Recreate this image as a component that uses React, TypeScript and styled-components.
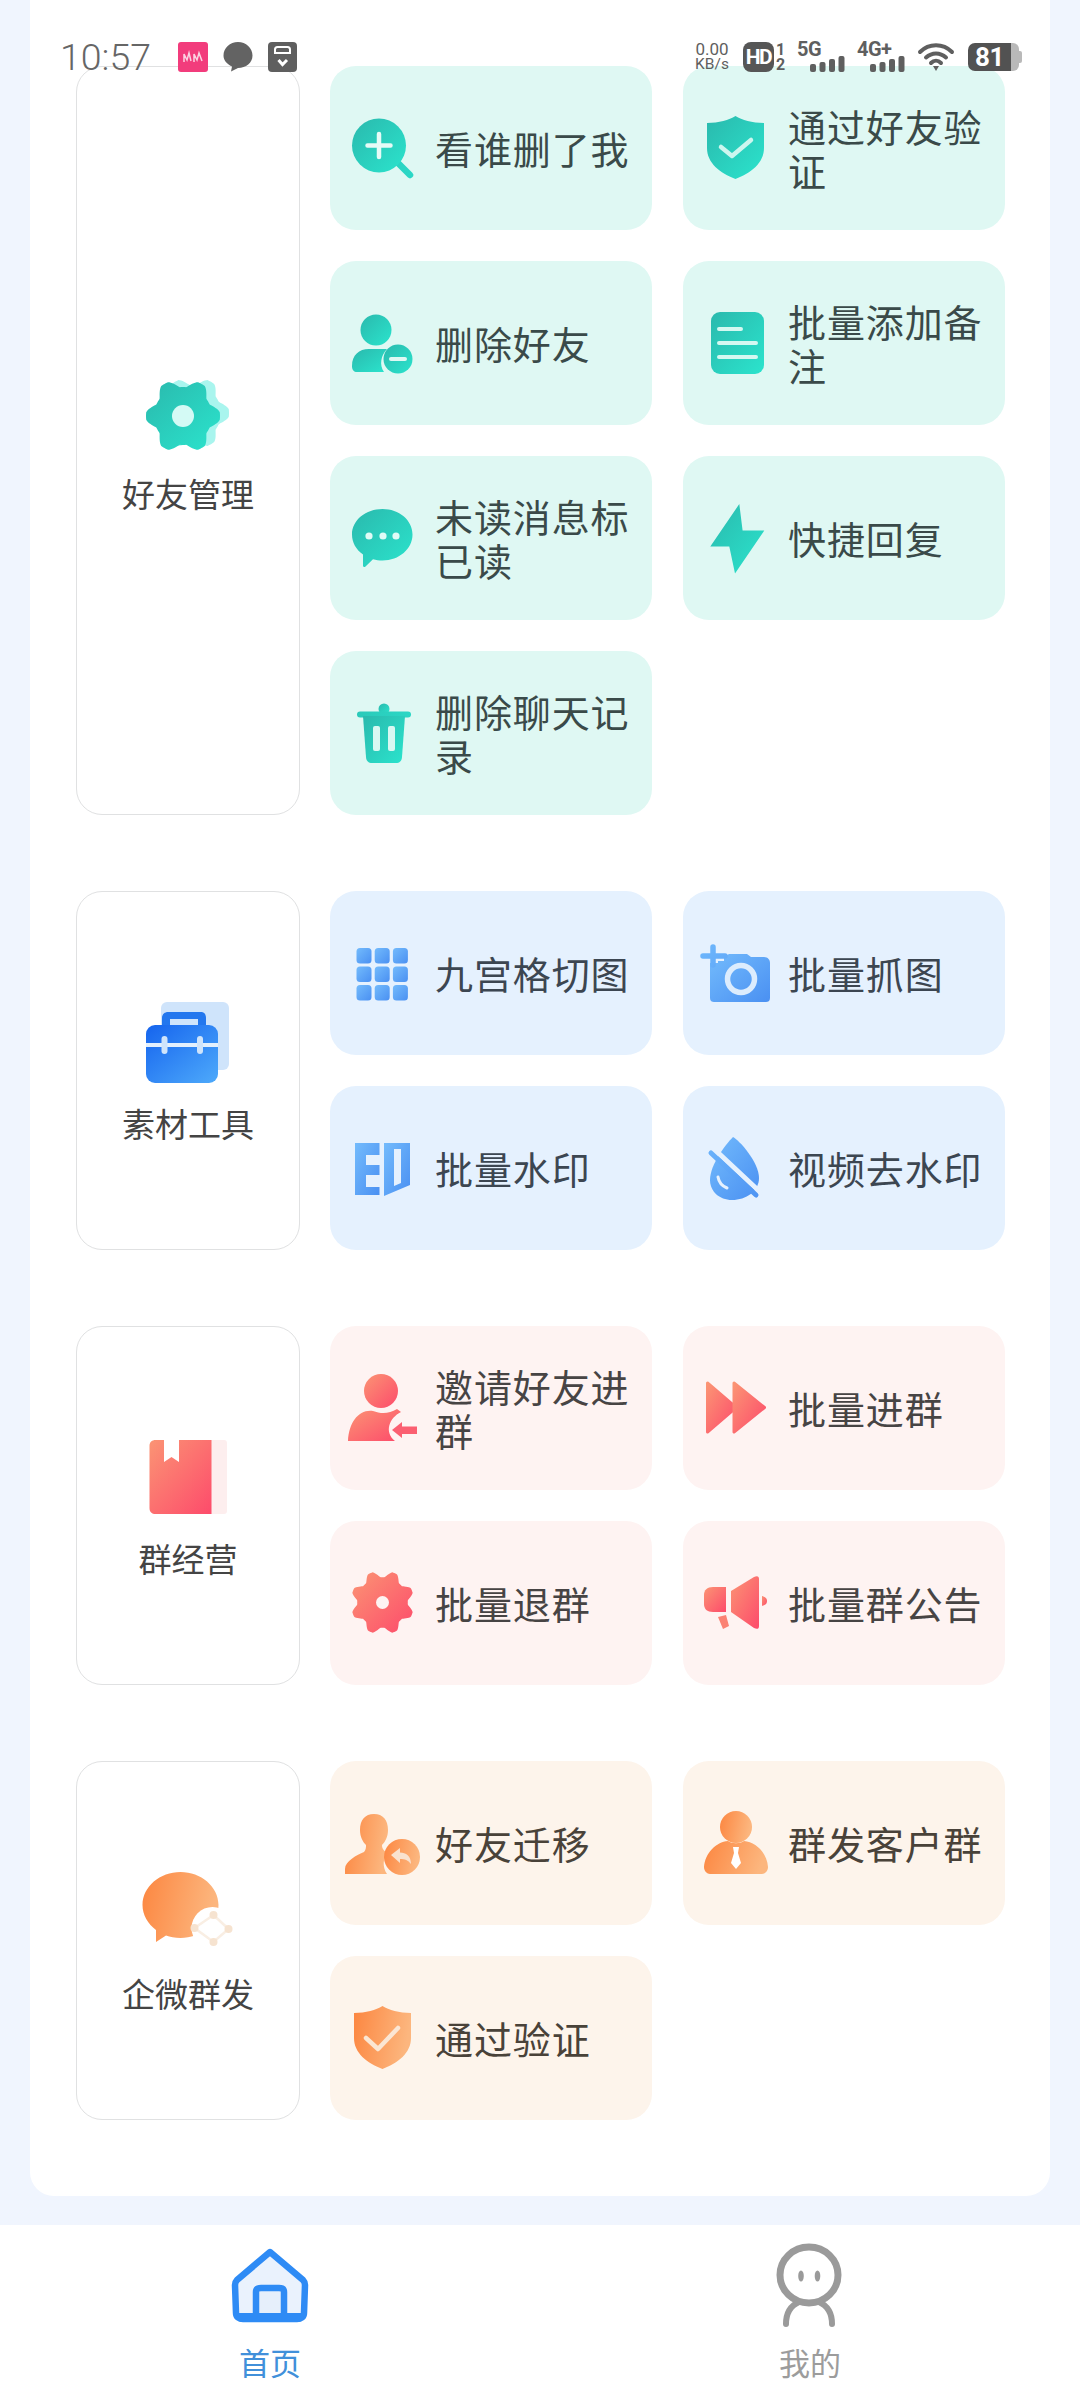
import React from 'react';
import styled, { createGlobalStyle } from 'styled-components';

const Global = createGlobalStyle`
  html, body { margin: 0; padding: 0; background: #f0f5fe; }
  body { font-family: "Noto Sans CJK SC", "Noto Sans", sans-serif; }
  * { box-sizing: border-box; }
`;

type Tone = 'teal' | 'blue' | 'red' | 'orange';

const toneBg: Record<Tone, string> = { teal: '#dff8f3', blue: '#e5f1fe', red: '#fef3f2', orange: '#fdf4eb' };
const toneText: Record<Tone, string> = { teal: '#3a4a49', blue: '#3c4651', red: '#474444', orange: '#494239' };

const Page = styled.div`
  position: relative;
  width: 1080px;
  height: 2400px;
  overflow: hidden;
  display: flex;
  flex-direction: column;
  background: #f0f5fe;
`;
const Main = styled.main`
  flex: 1;
  padding: 0 30px 29px;
`;
const Card = styled.div`
  height: 100%;
  background: #fff;
  border-radius: 0 0 24px 24px;
  padding: 66px 46px 0;
  display: flex;
  flex-direction: column;
  gap: 76px;
`;
const Group = styled.section`
  display: grid;
  grid-template-columns: 224px 1fr;
  column-gap: 30px;
`;
const Panel = styled.div`
  border: 1.5px solid #e0e1e2;
  border-radius: 26px;
  display: flex;
  flex-direction: column;
  align-items: center;
  justify-content: center;
  gap: 22px;
  padding-bottom: 2px;
`;
const PanelLabel = styled.div`
  font-size: 33px;
  line-height: 30px;
  color: #444;
  white-space: nowrap;
`;
const TileGrid = styled.div`
  display: grid;
  grid-template-columns: 322px 322px;
  grid-auto-rows: 164px;
  gap: 31px 31px;
`;
const Tile = styled.div<{ $tone: Tone }>`
  display: flex;
  align-items: center;
  gap: 20px;
  padding: 0 18px 0 21px;
  border-radius: 26px;
  background: ${p => toneBg[p.$tone]};
  color: ${p => toneText[p.$tone]};
`;
const TileText = styled.div`
  font-size: 38px;
  letter-spacing: 0.9px;
  line-height: 44px;
`;
const TileSvg = styled.svg`
  width: 64px;
  height: 64px;
  flex: none;
  overflow: visible;
  display: block;
`;
const PanelSvg = styled.svg`
  width: 84px;
  height: 84px;
  flex: none;
  overflow: visible;
  display: block;
`;
const DefsSvg = styled.svg`
  display: block;
  width: 0;
  height: 0;
`;

const Nav = styled.nav`
  height: 175px;
  background: #fff;
  display: grid;
  grid-template-columns: 1fr 1fr;
  padding-top: 19px;
`;
const NavItem = styled.div`
  display: flex;
  flex-direction: column;
  align-items: center;
  gap: 12px;
`;
const NavLabel = styled.div<{ $active?: boolean }>`
  font-size: 31px;
  line-height: 44px;
  color: ${p => (p.$active ? '#4190da' : '#9c9c9c')};
`;

const StatusBar = styled.div`
  position: absolute;
  top: 42px;
  left: 60px;
  right: 58px;
  height: 30px;
  display: flex;
  align-items: center;
  justify-content: space-between;
  font-family: Roboto, "Liberation Sans", sans-serif;
  color: #5f5f5f;
`;
const StatusLeft = styled.div`
  display: flex;
  align-items: center;
`;
const StatusRight = styled.div`
  display: flex;
  align-items: center;
  gap: 12px;
`;
const Clock = styled.span`
  font-size: 37.5px;
  font-weight: 300;
  line-height: 30px;
  width: 118px;
  color: #666;
`;
const StatusIcon = styled.svg`
  width: 30px;
  height: 30px;
  display: block;
  margin-right: 15px;
`;
const Speed = styled.div`
  width: 38px;
  display: flex;
  flex-direction: column;
  align-items: center;
  font-size: 17px;
  line-height: 15px;
  white-space: nowrap;
`;
const SpeedUnit = styled.span`
  font-size: 15.5px;
`;
const HdWrap = styled.div`
  display: flex;
  align-items: center;
  gap: 2px;
`;
const HdBadge = styled.span`
  width: 31px;
  height: 30px;
  border-radius: 8px;
  background: #565656;
  color: #fff;
  font-size: 21px;
  font-weight: 700;
  letter-spacing: -1.5px;
  display: flex;
  align-items: center;
  justify-content: center;
`;
const SimIndex = styled.div`
  display: flex;
  flex-direction: column;
  font-size: 16px;
  font-weight: 700;
  line-height: 15px;
  width: 9px;
`;
const Signal = styled.div`
  width: 48px;
  height: 30px;
  display: flex;
  flex-direction: column;
`;
const NetText = styled.span`
  font-size: 20px;
  font-weight: 700;
  line-height: 14px;
  height: 14px;
  letter-spacing: -0.5px;
`;
const BarsSvg = styled.svg`
  width: 35px;
  height: 16px;
  align-self: flex-end;
  display: block;
`;
const WifiSvg = styled.svg`
  width: 39px;
  height: 30px;
  display: block;
`;
const Battery = styled.div`
  display: flex;
  align-items: center;
  height: 28px;
`;
const BatteryFill = styled.span`
  width: 43px;
  height: 28px;
  border-radius: 7px 0 0 7px;
  background: #525252;
  color: #fff;
  font-size: 26px;
  font-weight: 700;
  letter-spacing: -0.5px;
  display: flex;
  align-items: center;
  justify-content: center;
`;
const BatteryRest = styled.span`
  width: 8px;
  height: 28px;
  border-radius: 0 6px 6px 0;
  background: #b9b9b9;
`;
const BatteryNub = styled.span`
  width: 3px;
  height: 12px;
  border-radius: 0 2px 2px 0;
  background: #b9b9b9;
`;

const lobed = (cx: number, cy: number, r: number, a: number, n: number, rotDeg = 0) => {
  const pts: string[] = [];
  for (let i = 0; i < 180; i++) {
    const th = (i / 180) * Math.PI * 2;
    const R = r + a * Math.max(-0.8, Math.min(0.8, Math.cos(n * (th - (rotDeg * Math.PI) / 180))));
    pts.push(`${(cx + R * Math.cos(th)).toFixed(2)},${(cy - R * Math.sin(th)).toFixed(2)}`);
  }
  return `M${pts.join('L')}Z`;
};

const T = ({ children }: { children: React.ReactNode }) => <TileSvg viewBox="0 0 64 64">{children}</TileSvg>;
const P = ({ children }: { children: React.ReactNode }) => <PanelSvg viewBox="0 0 84 84">{children}</PanelSvg>;

const shieldPath = 'M31.5 0 C38 4 48 7 60 7 V32 C60 47 47 57 31.5 63 C16 57 3 47 3 32 V7 C15 7 25 4 31.5 0 Z';

const icons = {
  search: (
    <T>
      <path d="M47 47 L59 59" stroke="url(#tealFlat)" strokeWidth="6.5" strokeLinecap="round" />
      <circle cx="28" cy="29.5" r="27" fill="url(#teal)" />
      <path d="M28 18 V41 M16.5 29.5 H39.5" stroke="#e6fbf7" strokeWidth="4.5" strokeLinecap="round" />
    </T>
  ),
  delFriend: (
    <T>
      <circle cx="25" cy="19" r="15.5" fill="url(#teal)" />
      <path d="M1 55 C1 44 8 38 18 38 H36 C30 44 28 54 33 61 H6 C3 61 1 59 1 55 Z" fill="url(#teal)" />
      <circle cx="47" cy="48" r="14.5" fill="url(#teal)" />
      <path d="M40 48 H54" stroke="#dff8f3" strokeWidth="4" strokeLinecap="round" />
    </T>
  ),
  shieldTeal: (
    <T>
      <path d={shieldPath} fill="url(#teal)" />
      <path d="M17 31 L28 40 L47 24" fill="none" stroke="#cdf6ef" strokeWidth="4.5" strokeLinecap="round" strokeLinejoin="round" />
    </T>
  ),
  doc: (
    <T>
      <rect x="7" y="1" width="53" height="62" rx="9" fill="url(#teal)" />
      <path d="M15 18 H37 M15 32 H52 M15 46 H52" stroke="#d4f8f1" strokeWidth="4" strokeLinecap="round" />
    </T>
  ),
  chat: (
    <T>
      <path d="M31.5 3 C48 3 61.5 14 61.5 28.5 C61.5 43 48 54.5 31.5 54.5 C28 54.5 25 54 22 53.2 L14.5 60.5 C13.5 61.5 12 61 12 59.5 L12 48.5 C5 43.5 1 36.5 1 28.5 C1 14 15 3 31.5 3 Z" fill="url(#teal)" />
      <circle cx="18" cy="30" r="3.6" fill="#e0fbf6" />
      <circle cx="32" cy="30" r="3.6" fill="#e0fbf6" />
      <circle cx="45" cy="30" r="3.6" fill="#e0fbf6" />
    </T>
  ),
  bolt: (
    <T>
      <path d="M35.3 -2 L6.3 40.5 H25.3 L31 67.6 L60.3 24.6 H38.6 Z" fill="url(#teal)" />
    </T>
  ),
  trash: (
    <T>
      <circle cx="33" cy="8" r="5.5" fill="url(#teal)" />
      <path d="M9 13.5 H57" stroke="url(#tealFlat)" strokeWidth="6" strokeLinecap="round" />
      <path d="M12 15 H54 L51 56 C50.7 60 48.5 62 45 62 H21 C17.5 62 15.3 60 15 56 Z" fill="url(#teal)" />
      <rect x="22" y="25" width="7" height="25" rx="2" fill="#d8f8f2" />
      <rect x="37" y="25" width="7" height="25" rx="2" fill="#d8f8f2" />
    </T>
  ),
  grid: (
    <T>
      {[0, 1, 2].flatMap(r =>
        [0, 1, 2].map(c => <rect key={`${r}${c}`} x={5.5 + c * 18.2} y={7 + r * 18.5} width="15" height="15.5" rx="3.5" fill="url(#blue)" />)
      )}
    </T>
  ),
  print: (
    <T>
      <path d="M4 7 H28.5 V19 H15 V29 H28.5 V39 H15 V51 H28.5 V59 H4 Z" fill="url(#blue)" />
      <path fillRule="evenodd" d="M33 7 H59 V49 L33 60 Z M43 13 V50 L50 47 V13 Z" fill="url(#blue)" />
    </T>
  ),
  camera: (
    <T>
      <path d="M6 22 C6 18 9 16 13 16 H20 L25 13 H43 L47 16 H60 C64 16 66 19 66 22 V57 C66 60 64 61 62 61 H10 C8 61 6 60 6 57 Z" fill="url(#blue)" />
      <circle cx="37" cy="38" r="13.5" fill="none" stroke="#dcecfd" strokeWidth="5.5" />
      <path d="M9 8 V22 M1 15 H20" stroke="#e5f1fe" strokeWidth="10" />
      <path d="M9 6 V24 M-1 15 H21" stroke="url(#blueFlat)" strokeWidth="5.5" strokeLinecap="round" />
    </T>
  ),
  drop: (
    <T>
      <path d="M29 1 C35 4 55 26 55 42 C55 55 42 64 28 64 C15 64 6 55 6 44 C6 29 21 9 29 1 Z" fill="url(#blue)" />
      <path d="M8 11 L56 56" stroke="#e5f1fe" strokeWidth="5" strokeLinecap="round" />
      <path d="M7 17 L52 59" stroke="url(#blueFlat)" strokeWidth="5" strokeLinecap="round" />
      <path d="M14 41 C15 47 18 50 23 52" fill="none" stroke="#e5f1fe" strokeWidth="3" strokeLinecap="round" />
    </T>
  ),
  invite: (
    <T>
      <circle cx="30" cy="15" r="17" fill="url(#red)" />
      <path d="M-3 65 C-2 46 8 33 22 35 C30 38 38 38 46 33 L50 36 C38 42 33 56 44 65 Z" fill="url(#red)" />
      <path d="M41 54 L51 46 V50.5 H66 V58 H51 V62 Z" fill="#fb5f71" />
    </T>
  ),
  forward: (
    <T>
      <path d="M3.5 7 L32 31.5 L3.5 56 Z" fill="url(#red)" stroke="url(#red)" strokeWidth="3" strokeLinejoin="round" />
      <path d="M30 7 L60.5 31.5 L30 56 Z" fill="url(#red)" stroke="url(#red)" strokeWidth="3" strokeLinejoin="round" />
    </T>
  ),
  gearRed: (
    <T>
      <path d={lobed(31.5, 31.5, 28.5, 4, 8, 22.5)} fill="url(#red)" />
      <circle cx="31.5" cy="31.5" r="6.5" fill="#fef3f2" />
    </T>
  ),
  horn: (
    <T>
      <path d="M22 16 H9 C3 16 0 19 0 24 V33 C0 38 3 41 9 41 H22 Z" fill="url(#red)" />
      <path d="M27 20 L50 6 C53 4.5 55 5 55 8 V55 C55 58 53 58.5 50 57 L27 41 Z" fill="url(#red)" />
      <path d="M58 25 C62 26 63 28 63 30 C63 32 62 34 58 35 Z" fill="url(#red)" />
      <path d="M14 46 L22 44 L25 55 L19 58 Z" fill="#fb8274" />
    </T>
  ),
  transfer: (
    <T>
      <path d="M9 19 C9 9 14 3 23 3 C32 3 37 9 37 19 C37 26 34 31 31 34 C31 38 33 40 37 42 C32 46 31 56 36 63 H-6 V58 C-6 50 6 44 13 41 C15 39 15 36 15 34 C12 31 9 26 9 19 Z" fill="url(#orange)" />
      <circle cx="51" cy="46" r="18" fill="url(#orange)" />
      <path d="M40 44 L49 37 V41.5 C55 41.5 60 45 60 53 C57 49 54 48 49 48 V52 Z" fill="#f9e2cf" />
    </T>
  ),
  client: (
    <T>
      <circle cx="32" cy="16" r="16" fill="url(#orange)" />
      <path d="M0 56 C1 42 12 31 24 30 C28 33 36 33 40 30 C52 31 63 42 64 56 C64 60 61 63 58 63 H6 C3 63 0 60 0 56 Z" fill="url(#orange)" />
      <path d="M29 36 H35 L34 42 L37 52 L32 58 L27 52 L30 42 Z" fill="#fff" />
    </T>
  ),
  shieldOrange: (
    <T>
      <path d={shieldPath} fill="url(#orange)" />
      <path d="M15 32 L27 43 L47 22" fill="none" stroke="#fbe6d3" strokeWidth="4.5" strokeLinecap="round" strokeLinejoin="round" />
    </T>
  ),
};

const panelIcons = {
  gear: (
    <P>
      <path d={lobed(47, 41, 32, 5, 6)} fill="#a9f5ee" />
      <path d={lobed(37, 44, 33, 5, 6)} fill="url(#teal)" />
      <circle cx="37" cy="44" r="11" fill="#d4faf5" />
    </P>
  ),
  toolbox: (
    <P>
      <rect x="15" y="0" width="68" height="68" rx="6" fill="#cfe4fb" />
      <path d="M16 24 V16 C16 12 19 10 22 10 H55 C58 10 60 12 60 16 V24 H52 V17 H24 V24 Z" fill="#2377ee" />
      <rect x="0" y="23" width="72" height="58" rx="9" fill="url(#toolbox)" />
      <rect x="0" y="41" width="72" height="4" fill="#e3f0fd" />
      <rect x="15.5" y="34" width="6" height="18" rx="3" fill="#cfe4fb" />
      <rect x="51" y="34" width="6" height="18" rx="3" fill="#cfe4fb" />
    </P>
  ),
  book: (
    <P>
      <rect x="60" y="3" width="21" height="74" rx="3" fill="#fdeeee" />
      <path d="M9.5 3 H18 V25 L25.5 20 L33 25 V3 H65.5 V77 H9.5 C6 77 3.5 75 3.5 71 V9 C3.5 5 6 3 9.5 3 Z" fill="url(#red)" />
    </P>
  ),
  wechat: (
    <P>
      <path d="M34.5 0 C55 0 72.5 14.5 72.5 33 C72.5 52 55 66 34.5 66 C29 66 24 65 20 63.5 L10 70 L10 58 C2 52 -3.5 43 -3.5 33 C-3.5 14.5 14 0 34.5 0 Z" fill="url(#orange)" />
      <circle cx="66.5" cy="56" r="21" fill="#fff" />
      <path d="M67.5 43 L82.5 57 L67.5 70 L48.5 56 Z" fill="none" stroke="#f9eee3" strokeWidth="2.5" />
      <circle cx="67.5" cy="43" r="4" fill="#f6e3d0" />
      <circle cx="82.5" cy="57" r="4" fill="#f6e3d0" />
      <circle cx="67.5" cy="70" r="4" fill="#f6e3d0" />
      <circle cx="48.5" cy="56" r="4" fill="#f6e3d0" />
    </P>
  ),
};

type Item = { label: string; icon: keyof typeof icons };
type GroupData = { title: string; tone: Tone; icon: keyof typeof panelIcons; items: Item[] };

const groups: GroupData[] = [
  {
    title: '好友管理', tone: 'teal', icon: 'gear',
    items: [
      { label: '看谁删了我', icon: 'search' },
      { label: '通过好友验证', icon: 'shieldTeal' },
      { label: '删除好友', icon: 'delFriend' },
      { label: '批量添加备注', icon: 'doc' },
      { label: '未读消息标已读', icon: 'chat' },
      { label: '快捷回复', icon: 'bolt' },
      { label: '删除聊天记录', icon: 'trash' },
    ],
  },
  {
    title: '素材工具', tone: 'blue', icon: 'toolbox',
    items: [
      { label: '九宫格切图', icon: 'grid' },
      { label: '批量抓图', icon: 'camera' },
      { label: '批量水印', icon: 'print' },
      { label: '视频去水印', icon: 'drop' },
    ],
  },
  {
    title: '群经营', tone: 'red', icon: 'book',
    items: [
      { label: '邀请好友进群', icon: 'invite' },
      { label: '批量进群', icon: 'forward' },
      { label: '批量退群', icon: 'gearRed' },
      { label: '批量群公告', icon: 'horn' },
    ],
  },
  {
    title: '企微群发', tone: 'orange', icon: 'wechat',
    items: [
      { label: '好友迁移', icon: 'transfer' },
      { label: '群发客户群', icon: 'client' },
      { label: '通过验证', icon: 'shieldOrange' },
    ],
  },
];

const Grad = ({ id, a, b, x2 = 1, y2 = 1 }: { id: string; a: string; b: string; x2?: number; y2?: number }) => (
  <linearGradient id={id} x1="0" y1="0" x2={x2} y2={y2}>
    <stop offset="0" stopColor={a} />
    <stop offset="1" stopColor={b} />
  </linearGradient>
);

const Bars = () => (
  <BarsSvg viewBox="0 0 35 16">
    <rect x="0" y="8" width="6" height="8" rx="2" fill="#5f5f5f" />
    <rect x="9.500" y="6" width="6" height="10" rx="2" fill="#5f5f5f" />
    <rect x="19" y="3" width="6" height="13" rx="2" fill="#5f5f5f" />
    <rect x="28.500" y="0" width="6" height="16" rx="2" fill="#5f5f5f" />
  </BarsSvg>
);

export default function App() {
  return (
    <>
      <Global />
      <DefsSvg>
        <defs>
          <Grad id="teal" a="#2ab9ad" b="#2be4cd" />
          <linearGradient id="tealFlat" gradientUnits="userSpaceOnUse" x1="0" y1="0" x2="64" y2="0">
            <stop offset="0" stopColor="#2ac8b8" />
            <stop offset="1" stopColor="#2bd8c6" />
          </linearGradient>
          <Grad id="blue" a="#73bbfc" b="#4a90f2" />
          <linearGradient id="blueFlat" gradientUnits="userSpaceOnUse" x1="0" y1="0" x2="64" y2="64">
            <stop offset="0" stopColor="#6fb8fc" />
            <stop offset="1" stopColor="#4a90f2" />
          </linearGradient>
          <Grad id="red" a="#fb9474" b="#fd4b6b" />
          <Grad id="orange" a="#fc8640" b="#fcb67e" y2={0.2} />
          <Grad id="toolbox" a="#1564ee" b="#4eaafb" />
        </defs>
      </DefsSvg>
      <Page>
        <Main>
          <Card>
            {groups.map(g => (
              <Group key={g.title}>
                <Panel>
                  {panelIcons[g.icon]}
                  <PanelLabel>{g.title}</PanelLabel>
                </Panel>
                <TileGrid>
                  {g.items.map(it => (
                    <Tile key={it.label} $tone={g.tone}>
                      {icons[it.icon]}
                      <TileText>{it.label}</TileText>
                    </Tile>
                  ))}
                </TileGrid>
              </Group>
            ))}
          </Card>
        </Main>
        <Nav>
          <NavItem>
            <PanelSvg viewBox="0 0 84 84">
              <path d="M42 8 L75 36 C76.500 37.500 77 39 77 41 L76 69 C76 73 73 75 69 75 H15 C11 75 8 73 8 69 L7 41 C7 39 7.500 37.500 9 36 Z" fill="#eaf2fd" stroke="#2e8bf5" strokeWidth="6.500" strokeLinejoin="round" />
              <path d="M28 70 V48 C28 45 30 44 33 44 H51 C54 44 56 45 56 48 V70" fill="#e6effb" stroke="#2e8bf5" strokeWidth="6.500" />
              <path d="M8 69 H76 V71 C76 75 73 78 69 78 H15 C11 78 8 75 8 71 Z" fill="#2e8bf5" />
            </PanelSvg>
            <NavLabel $active>首页</NavLabel>
          </NavItem>
          <NavItem>
            <PanelSvg viewBox="0 0 84 84">
              <ellipse cx="41" cy="31" rx="29" ry="28" fill="none" stroke="#9a9a9a" strokeWidth="7" />
              <ellipse cx="33" cy="32" rx="2.800" ry="5.500" fill="#9a9a9a" />
              <ellipse cx="49.500" cy="32" rx="2.800" ry="5.500" fill="#9a9a9a" />
              <path d="M18 80 C18 70 22 62 31 58 M64 80 C64 70 60 62 51 58" fill="none" stroke="#9a9a9a" strokeWidth="6" strokeLinecap="round" />
            </PanelSvg>
            <NavLabel>我的</NavLabel>
          </NavItem>
        </Nav>
        <StatusBar>
          <StatusLeft>
            <Clock>10:57</Clock>
            <StatusIcon viewBox="0 0 30 30">
              <rect width="30" height="30" rx="3" fill="#f23c7c" />
              <path d="M6 20 V12 L9 18 L11 11 L13 19 M16 20 V12 L19 18 L21 11 L24 19" fill="none" stroke="#fbd3e2" strokeWidth="1.500" />
            </StatusIcon>
            <StatusIcon viewBox="0 0 30 30">
              <path d="M15 0 C23 0 29.500 6 29.500 13.500 C29.500 21 23 26 15 26 L8 29.500 L9 24.500 C3.500 22 0.500 18 0.500 13.500 C0.500 6 7 0 15 0 Z" fill="#636363" />
            </StatusIcon>
            <StatusIcon viewBox="0 0 30 30">
              <rect width="29" height="30" rx="4" fill="#5f5f5f" />
              <path d="M7 12 V7.500 C7 6 8 5 9.500 5 H19.500 C21 5 22 6 22 7.500 V12 M6 11 H23" fill="none" stroke="#fff" strokeWidth="2" />
              <path d="M10.500 18 L14.500 22.500 L19 18" fill="none" stroke="#fff" strokeWidth="3" />
            </StatusIcon>
          </StatusLeft>
          <StatusRight>
            <Speed>
              <span>0.00</span>
              <SpeedUnit>KB/s</SpeedUnit>
            </Speed>
            <HdWrap>
              <HdBadge>HD</HdBadge>
              <SimIndex>
                <span>1</span>
                <span>2</span>
              </SimIndex>
            </HdWrap>
            <Signal>
              <NetText>5G</NetText>
              <Bars />
            </Signal>
            <Signal>
              <NetText>4G+</NetText>
              <Bars />
            </Signal>
            <WifiSvg viewBox="0 0 39 30">
              <path d="M3 10 C12 1 26 1 35 10 M9 15.500 C15 10 23 10 29 15.500 M14 21 C17 18 21 18 24 21" fill="none" stroke="#5f5f5f" strokeWidth="4" strokeLinecap="round" />
              <path d="M16 24 H22 L19 29 Z" fill="#5f5f5f" />
            </WifiSvg>
            <Battery>
              <BatteryFill>81</BatteryFill>
              <BatteryRest />
              <BatteryNub />
            </Battery>
          </StatusRight>
        </StatusBar>
      </Page>
    </>
  );
}
